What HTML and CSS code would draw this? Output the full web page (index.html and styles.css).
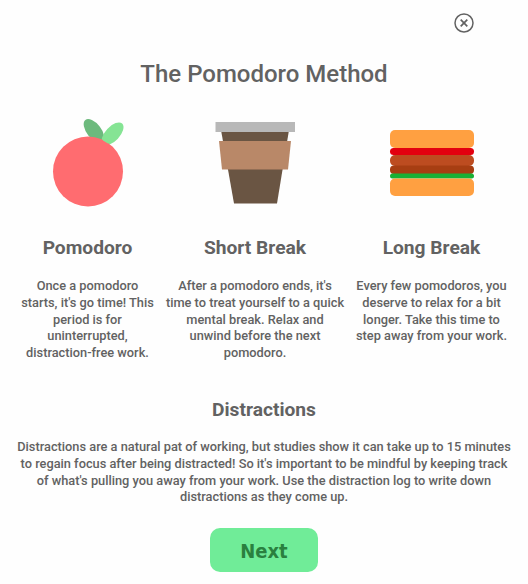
FILE: index.html
```html
<!DOCTYPE html>
<html lang="en">
<head>
<meta charset="utf-8">
<title>The Pomodoro Method</title>
<link rel="stylesheet" href="styles.css">
</head>
<body>
<main class="modal">
  <header class="toolbar">
    <button class="close" aria-label="Close">
      <svg width="20" height="20" viewBox="0 0 20 20" fill="none" stroke="#626262">
        <circle cx="10" cy="10" r="9" stroke-width="1.5"/>
        <path d="M6.700 6.700l6.600 6.600M13.300 6.700l-6.600 6.600" stroke-width="1.700"/>
      </svg>
    </button>
  </header>
  <h1 class="title">The Pomodoro Method</h1>
  <section class="steps">
    <article class="step">
      <svg class="art" width="100" height="100" viewBox="0 0 100 100">
        <ellipse cx="56" cy="21" rx="7.200" ry="14" transform="rotate(-38 56 21)" fill="#6dba7d"/>
        <ellipse cx="74.600" cy="23.800" rx="7.200" ry="14" transform="rotate(43 74.600 23.800)" fill="#85e494"/>
        <circle cx="50" cy="61.500" r="35" fill="#ff6c70"/>
        <path d="M65 30.500L66 27L71 31.500L70 33.500Z" fill="#85e494"/>
      </svg>
      <h2 class="heading">Pomodoro</h2>
      <p class="copy">Once a pomodoro<br>starts, it's go time! This<br>period is for<br>uninterrupted,<br>distraction-free work.</p>
    </article>
    <article class="step">
      <svg class="art" width="100" height="100" viewBox="0 0 100 100">
        <path d="M16 20H84L72 93.500H29Z" fill="#6a5543"/>
        <path d="M14 31H86L83 59.500H17Z" fill="#b98868"/>
        <path d="M10.500 12H90V22H10.500Z" fill="#b8b8b8"/>
      </svg>
      <h2 class="heading">Short Break</h2>
      <p class="copy">After a pomodoro ends, it's<br>time to treat yourself to a quick<br>mental break. Relax and<br>unwind before the next<br>pomodoro.</p>
    </article>
    <article class="step">
      <svg class="art" width="100" height="100" viewBox="0 0 100 100">
        <rect x="8" y="20" width="84" height="18" rx="5" fill="#ffa041"/>
        <rect x="8" y="38" width="84" height="7" rx="3.500" fill="#e3000f"/>
        <rect x="8" y="45" width="84" height="11" rx="5" fill="#bd4c20"/>
        <rect x="8" y="55.500" width="84" height="8.500" rx="4" fill="#a73e12"/>
        <rect x="8" y="63.500" width="84" height="5" rx="2.500" fill="#18b135"/>
        <rect x="8" y="68.500" width="84" height="17.500" rx="5" fill="#ffa041"/>
      </svg>
      <h2 class="heading">Long Break</h2>
      <p class="copy">Every few pomodoros, you<br>deserve to relax for a bit<br>longer. Take this time to<br>step away from your work.</p>
    </article>
  </section>
  <section class="distractions">
    <h2 class="heading">Distractions</h2>
    <p class="copy">Distractions are a natural pat of working, but studies show it can take up to 15 minutes<br>to regain focus after being distracted! So it's important to be mindful by keeping track<br>of what's pulling you away from your work. Use the distraction log to write down<br>distractions as they come up.</p>
  </section>
  <button class="next">Next</button>
</main>
</body>
</html>
```

FILE: styles.css
```css
* {
  box-sizing: border-box;
}

body {
  margin: 0;
  background: #fefefe;
  color: #626262;
  font-family: Roboto, sans-serif;
}

.modal {
  display: flex;
  flex-direction: column;
  align-items: center;
  height: 584px;
  overflow: hidden;
}

.toolbar {
  display: flex;
  justify-content: flex-end;
  width: 100%;
  padding: 13px 54px 0 0;
}

.close {
  width: 20px;
  height: 20px;
  padding: 0;
  border: 0;
  background: none;
}

.close svg {
  display: block;
}

.title {
  margin: 27px 0 22px;
  font-size: 24px;
  line-height: 28px;
  font-weight: 500;
}

.steps {
  display: grid;
  grid-template-columns: 134px 179px 152px;
  column-gap: 11px;
  height: 288px;
}

.step {
  display: flex;
  flex-direction: column;
  align-items: center;
}

.art {
  display: block;
  margin-bottom: 26px;
}

.heading {
  margin: 0;
  font-size: 19.2px;
  line-height: 24px;
  font-weight: 700;
  white-space: nowrap;
  text-align: center;
}

.copy {
  margin: 18px 0 0;
  font-size: 12.8px;
  line-height: 16.8px;
  font-weight: 500;
  white-space: nowrap;
  text-align: center;
}

.distractions .copy {
  margin-top: 17px;
}

.next {
  flex: none;
  width: 108px;
  height: 44px;
  margin-top: 22px;
  padding: 1px 0 0;
  border: 0;
  border-radius: 10px;
  background: #70ec98;
  color: #2a803f;
  font: 700 20px "DejaVu Sans Condensed", "DejaVu Sans", sans-serif;
}
```
